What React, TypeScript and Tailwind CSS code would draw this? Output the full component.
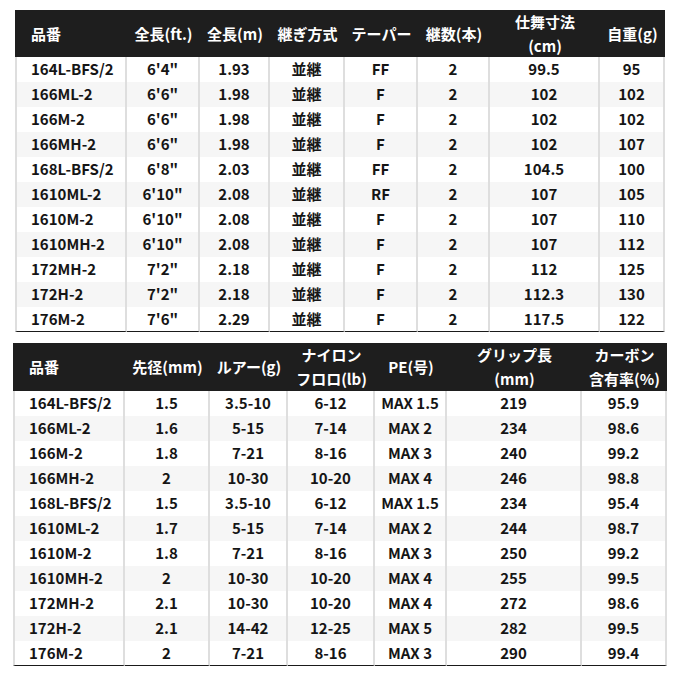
import React from "react";

type Table = {
    cols: number[];
    heads: string[][];
    rows: string[][];
    headH: string;
    margin: string;
};

const specTable: Table = {
    cols: [112, 73, 70, 75, 73, 72, 110, 65],
    heads: [["品番"], ["全長(ft.)"], ["全長(m)"], ["継ぎ方式"], ["テーパー"], ["継数(本)"], ["仕舞寸法", "(cm)"], ["自重(g)"]],
    rows: [
        ["164L-BFS/2", "6'4\"", "1.93", "並継", "FF", "2", "99.5", "95"],
        ["166ML-2", "6'6\"", "1.98", "並継", "F", "2", "102", "102"],
        ["166M-2", "6'6\"", "1.98", "並継", "F", "2", "102", "102"],
        ["166MH-2", "6'6\"", "1.98", "並継", "F", "2", "102", "107"],
        ["168L-BFS/2", "6'8\"", "2.03", "並継", "FF", "2", "104.5", "100"],
        ["1610ML-2", "6'10\"", "2.08", "並継", "RF", "2", "107", "105"],
        ["1610M-2", "6'10\"", "2.08", "並継", "F", "2", "107", "110"],
        ["1610MH-2", "6'10\"", "2.08", "並継", "F", "2", "107", "112"],
        ["172MH-2", "7'2\"", "2.18", "並継", "F", "2", "112", "125"],
        ["172H-2", "7'2\"", "2.18", "並継", "F", "2", "112.3", "130"],
        ["176M-2", "7'6\"", "2.29", "並継", "F", "2", "117.5", "122"],
    ],
    headH: "h-[47px]",
    margin: "ml-[15px] mt-[10px]",
};

const lineTable: Table = {
    cols: [112, 85, 78, 87, 72, 135, 85],
    heads: [["品番"], ["先径(mm)"], ["ルアー(g)"], ["ナイロン", "フロロ(lb)"], ["PE(号)"], ["グリップ長", "(mm)"], ["カーボン", "含有率(%)"]],
    rows: [
        ["164L-BFS/2", "1.5", "3.5-10", "6-12", "MAX 1.5", "219", "95.9"],
        ["166ML-2", "1.6", "5-15", "7-14", "MAX 2", "234", "98.6"],
        ["166M-2", "1.8", "7-21", "8-16", "MAX 3", "240", "99.2"],
        ["166MH-2", "2", "10-30", "10-20", "MAX 4", "246", "98.8"],
        ["168L-BFS/2", "1.5", "3.5-10", "6-12", "MAX 1.5", "234", "95.4"],
        ["1610ML-2", "1.7", "5-15", "7-14", "MAX 2", "244", "98.7"],
        ["1610M-2", "1.8", "7-21", "8-16", "MAX 3", "250", "99.2"],
        ["1610MH-2", "2", "10-30", "10-20", "MAX 4", "255", "99.5"],
        ["172MH-2", "2.1", "10-30", "10-20", "MAX 4", "272", "98.6"],
        ["172H-2", "2.1", "14-42", "12-25", "MAX 5", "282", "99.5"],
        ["176M-2", "2", "7-21", "8-16", "MAX 3", "290", "99.4"],
    ],
    headH: "h-[48px]",
    margin: "ml-[13px] mt-[11px]",
};

function SpecTable({ t }: { t: Table }) {
    const grid = { gridTemplateColumns: t.cols.map((c) => `${c}px`).join(" ") };
    return (
        <div className={`${t.margin} w-fit`}>
            <div className={`grid ${t.headH} bg-[#1e1e1e] text-white`} style={grid}>
                {t.heads.map((h, i) => (
                    <div
                        key={i}
                        className={`flex flex-col justify-center leading-[24px] ${i === 0 ? "items-start pl-[16px]" : "items-center"}`}
                    >
                        {h.map((line) => (
                            <span key={line}>{line}</span>
                        ))}
                    </div>
                ))}
            </div>
            {t.rows.map((r, ri) => (
                <div
                    key={ri}
                    className={`grid h-[25px] text-[#151515] ${ri % 2 === 1 ? "bg-[#f6f6f6]" : "bg-white"}`}
                    style={grid}
                >
                    {r.map((cell, ci) => (
                        <div
                            key={ci}
                            className={`flex items-center border-r-2 border-[#dedede] ${ci === 0 ? "border-l-2 pl-[14px]" : "justify-center"} ${ri === t.rows.length - 1 ? "border-b border-b-[#1a1a1a]" : ""}`}
                        >
                            {cell}
                        </div>
                    ))}
                </div>
            ))}
        </div>
    );
}

export default function App() {
    return (
        <div
            className="w-[680px] h-[680px] bg-white text-[15px] font-bold"
            style={{ fontFamily: '"Noto Sans CJK JP", "Noto Sans", sans-serif' }}
        >
            <SpecTable t={specTable} />
            <SpecTable t={lineTable} />
        </div>
    );
}
